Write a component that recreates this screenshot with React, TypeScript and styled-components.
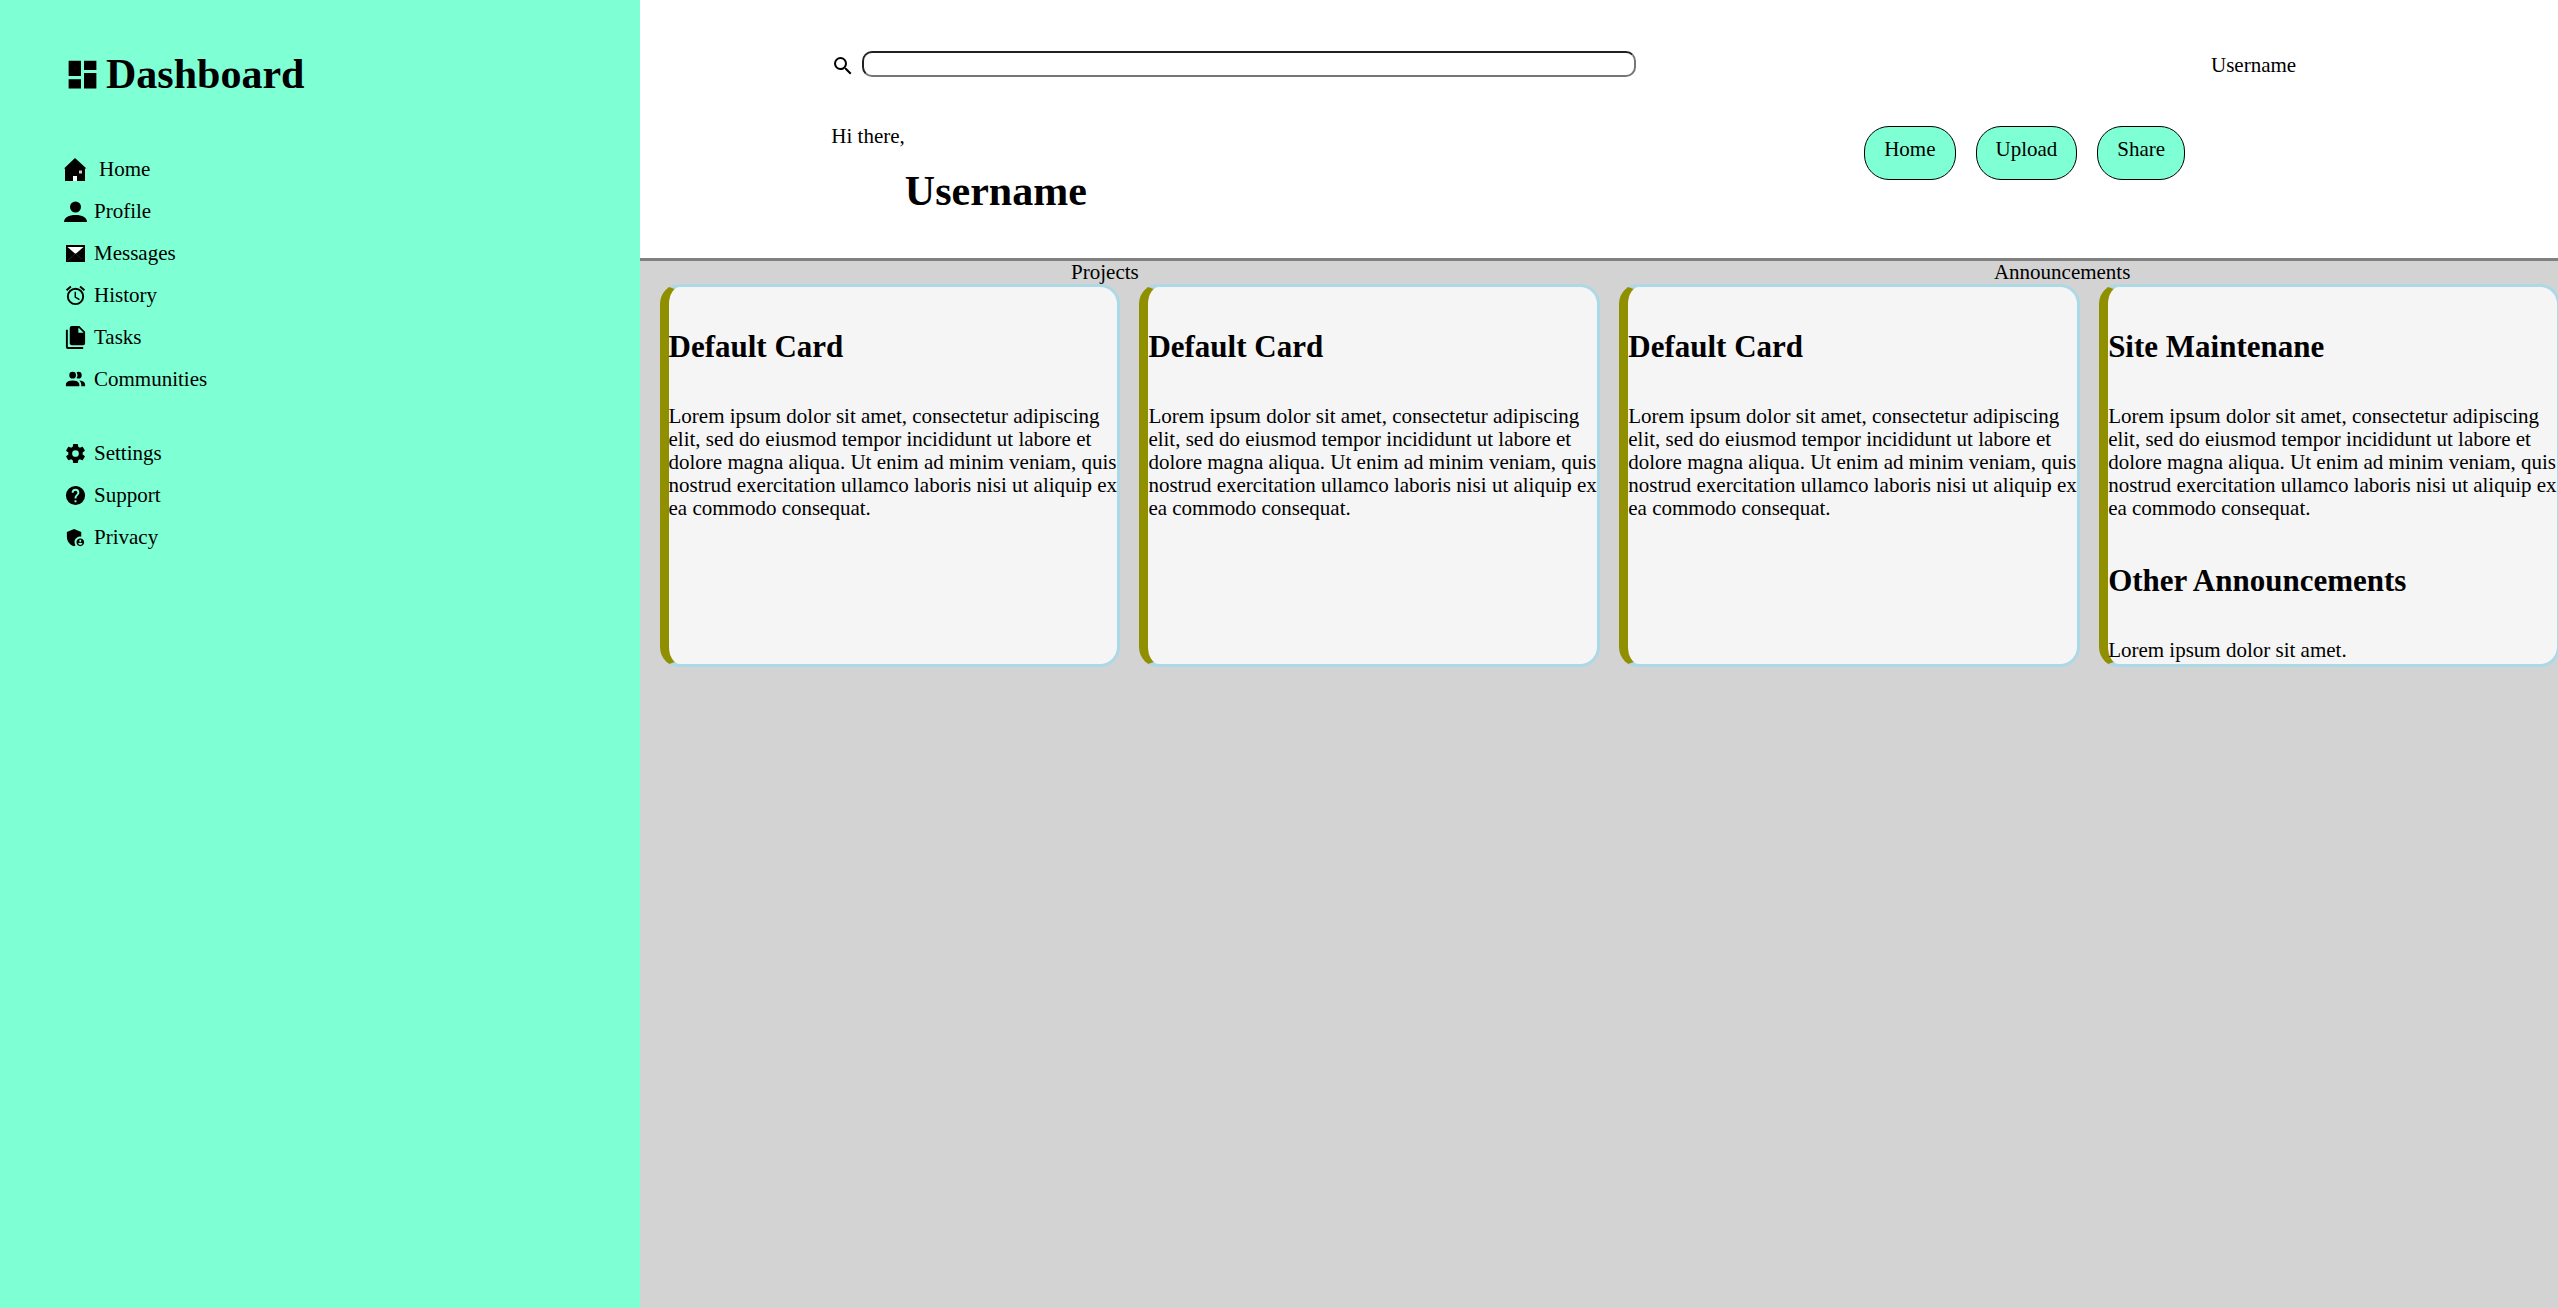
import React from "react";
import styled, { createGlobalStyle } from "styled-components";
import { MdAdminPanelSettings, MdSearch } from "react-icons/md";

const GlobalStyle = createGlobalStyle`
  *, *::before, *::after { box-sizing: border-box; }
  body {
    margin: 0;
    background: lightgray;
    color: #000;
    font-family: "Liberation Serif", "Times New Roman", serif;
    font-size: 21px;
    line-height: 23px;
  }
  h1, h2, p, ul { margin: 0; padding: 0; }
`;

const Page = styled.div`
  display: grid;
  grid-template-columns: 1fr 3fr;
  min-height: 100vh;
`;

const Sidebar = styled.aside`
  display: flex;
  flex-direction: column;
  padding: 50px 64px;
  background: aquamarine;
`;

const Brand = styled.div`
  display: flex;
  align-items: center;
  gap: 5px;
  margin-bottom: 50px;
`;

const Title = styled.h1`
  font-size: 42px;
  line-height: 48px;
`;

const Menu = styled.ul`
  display: flex;
  flex-direction: column;
  list-style: none;
  margin-bottom: 32px;
`;

const MenuItem = styled.li`
  display: flex;
  align-items: center;
  height: 42px;
`;

const MenuLink = styled.a<{ $wide?: boolean }>`
  display: flex;
  align-items: center;
  gap: ${(p) => (p.$wide ? 12 : 7)}px;
  color: inherit;
  text-decoration: none;
`;

const Icon = styled.svg<{ $size: number }>`
  display: block;
  flex: none;
  width: ${(p) => p.$size}px;
  height: ${(p) => p.$size}px;
  overflow: visible;
  fill: #000;
`;

const Main = styled.main`
  min-width: 0;
  overflow-x: clip;
`;

const Header = styled.header`
  display: flex;
  flex-direction: column;
  gap: 47px;
  padding: 51px 10% 43px;
  background: #fff;
  border-bottom: 3px solid gray;
`;

const TopRow = styled.div`
  display: flex;
  align-items: flex-start;
  justify-content: space-between;
  padding-right: 70px;
`;

const SearchBox = styled.label`
  display: flex;
  align-items: flex-start;
  gap: 7px;
  flex: 0 1 805px;

  svg { flex: none; margin-top: 3px; }
`;

const SearchInput = styled.input`
  flex: 1;
  min-width: 0;
  height: 26px;
  padding: 1px 8px;
  border: 2px inset #767676;
  border-radius: 10px;
  background: #fff;
  font: inherit;
`;

const UserName = styled.p`
  padding-top: 3px;
`;

const GreetingRow = styled.div`
  display: flex;
  align-items: flex-start;
  justify-content: space-between;
  padding-right: 181px;
`;

const Greeting = styled.div`
  display: flex;
  align-items: flex-start;

  h1 { margin-top: 42px; }
`;

const Actions = styled.div`
  display: flex;
  gap: 20px;
`;

const ActionButton = styled.button`
  margin: 1px 0 0;
  padding: 11px 19px 18px;
  border: 1px solid #000;
  border-radius: 25px;
  background: aquamarine;
  color: inherit;
  font: inherit;
  cursor: pointer;
`;

const SectionLabels = styled.div`
  display: flex;
  justify-content: space-around;
  padding-left: 4px;
`;

/* The last card bleeds slightly past the right edge. */
const Cards = styled.div`
  display: grid;
  grid-template-columns: repeat(4, minmax(0, 1fr));
  gap: 19px;
  margin-right: -2px;
  padding-left: 20px;
`;

const CardBox = styled.article`
  padding: 42px 0 2px;
  border: 3px solid lightblue;
  border-left: 9px solid #8f8f00;
  border-radius: 20px;
  background: whitesmoke;
`;

const CardTitle = styled.h2`
  margin-bottom: 40px;
  font-size: 31px;
  line-height: 36px;
`;

const CardText = styled.p`
  & + h2 { margin-top: 43px; }
`;

const LOREM =
  "Lorem ipsum dolor sit amet, consectetur adipiscing elit, sed do eiusmod tempor incididunt ut labore et dolore magna aliqua. Ut enim ad minim veniam, quis nostrud exercitation ullamco laboris nisi ut aliquip ex ea commodo consequat.";

const glyph = (d: string) => (
  <Icon $size={23} viewBox="0 0 24 24" aria-hidden="true">
    <path d={d} />
  </Icon>
);

const HomeIcon = (
  <Icon $size={23} viewBox="0 0 23 23" aria-hidden="true">
    <path d="M11 0L22.500 10.500H21V23H1V10.500H0Z" />
    <path fill="#fff" d="M9 18h4v5H9z" />
    <path fill="#ccc" d="M15 12.500h3v3h-3z" />
  </Icon>
);

const ProfileIcon = (
  <Icon $size={23} viewBox="0 0 23 23" aria-hidden="true">
    <circle cx="11.500" cy="7" r="5.500" />
    <path d="M0 22C0 17.500 5 15 11.500 15S23 17.500 23 22Z" />
  </Icon>
);

const MessagesIcon = (
  <Icon $size={23} viewBox="0 0 23 23" aria-hidden="true">
    <path d="M2 3H21V20H2Z" />
    <path fill="#fff" d="M3.500 5H19.500L11.500 12Z" />
    <path fill="none" stroke="#444" strokeWidth="0.500" d="M3 19L11.500 11.500L18 17.500" />
  </Icon>
);

const primary = [
  { label: "Home", icon: HomeIcon, wide: true },
  { label: "Profile", icon: ProfileIcon },
  { label: "Messages", icon: MessagesIcon },
  {
    label: "History",
    icon: glyph(
      "M12,20A7,7 0 0,1 5,13A7,7 0 0,1 12,6A7,7 0 0,1 19,13A7,7 0 0,1 12,20M12,4A9,9 0 0,0 3,13A9,9 0 0,0 12,22A9,9 0 0,0 21,13A9,9 0 0,0 12,4M12.500,8H11V14L15.750,16.850L16.500,15.620L12.500,13.250V8M7.880,3.390L6.600,1.860L2,5.710L3.290,7.240L7.880,3.390M22,5.720L17.400,1.860L16.110,3.390L20.710,7.250L22,5.720Z"
    ),
  },
  {
    label: "Tasks",
    icon: glyph(
      "M15,7H20.500L15,1.500V7M8,0H16L22,6V18A2,2 0 0,1 20,20H8C6.890,20 6,19.100 6,18V2A2,2 0 0,1 8,0M4,4V22H20V24H4A2,2 0 0,1 2,22V4H4Z"
    ),
  },
  {
    label: "Communities",
    icon: glyph(
      "M16 17V19H2V17S2 13 9 13 16 17 16 17M12.500 7.500A3.500 3.500 0 1 0 9 11A3.500 3.500 0 0 0 12.500 7.500M15.940 13A5.320 5.320 0 0 1 18 17V19H22V17S22 13.370 15.940 13M15 4A3.390 3.390 0 0 0 13.070 4.590A5 5 0 0 1 13.070 10.410A3.390 3.390 0 0 0 15 11A3.500 3.500 0 0 0 15 4Z"
    ),
  },
];

const secondary = [
  {
    label: "Settings",
    icon: glyph(
      "M12,15.500A3.500,3.500 0 0,1 8.500,12A3.500,3.500 0 0,1 12,8.500A3.500,3.500 0 0,1 15.500,12A3.500,3.500 0 0,1 12,15.500M19.430,12.970C19.470,12.650 19.500,12.330 19.500,12C19.500,11.670 19.470,11.340 19.430,11L21.540,9.370C21.730,9.220 21.780,8.950 21.660,8.730L19.660,5.270C19.540,5.050 19.270,4.960 19.050,5.050L16.560,6.050C16.040,5.660 15.500,5.320 14.870,5.070L14.500,2.420C14.460,2.180 14.250,2 14,2H10C9.750,2 9.540,2.180 9.500,2.420L9.130,5.070C8.500,5.320 7.960,5.660 7.440,6.050L4.950,5.050C4.730,4.960 4.460,5.050 4.340,5.270L2.340,8.730C2.210,8.950 2.270,9.220 2.460,9.370L4.570,11C4.530,11.340 4.500,11.670 4.500,12C4.500,12.330 4.530,12.650 4.570,12.970L2.460,14.630C2.270,14.780 2.210,15.050 2.340,15.270L4.340,18.730C4.460,18.950 4.730,19.030 4.950,18.950L7.440,17.940C7.960,18.340 8.500,18.680 9.130,18.930L9.500,21.580C9.540,21.820 9.750,22 10,22H14C14.250,22 14.460,21.820 14.500,21.580L14.870,18.930C15.500,18.670 16.040,18.340 16.560,17.940L19.050,18.950C19.270,19.030 19.540,18.950 19.660,18.730L21.660,15.270C21.780,15.050 21.730,14.780 21.540,14.630L19.430,12.970Z"
    ),
  },
  {
    label: "Support",
    icon: glyph(
      "M15.070,11.250L14.170,12.170C13.450,12.890 13,13.500 13,15H11V14.500C11,13.390 11.450,12.390 12.170,11.670L13.410,10.410C13.780,10.050 14,9.550 14,9C14,7.890 13.100,7 12,7A2,2 0 0,0 10,9H8A4,4 0 0,1 12,5A4,4 0 0,1 16,9C16,9.880 15.640,10.670 15.070,11.250M13,19H11V17H13M12,2A10,10 0 0,0 2,12A10,10 0 0,0 12,22A10,10 0 0,0 22,12C22,6.470 17.500,2 12,2Z"
    ),
  },
  { label: "Privacy", icon: <MdAdminPanelSettings size={23} aria-hidden="true" /> },
];

type Entry = { label: string; icon: React.ReactNode; wide?: boolean };

const MenuList = ({ items }: { items: Entry[] }) => (
  <Menu>
    {items.map((item) => (
      <MenuItem key={item.label}>
        <MenuLink href="#" $wide={item.wide}>
          {item.icon}
          {item.label}
        </MenuLink>
      </MenuItem>
    ))}
  </Menu>
);

const cards = [
  [{ title: "Default Card", text: LOREM }],
  [{ title: "Default Card", text: LOREM }],
  [{ title: "Default Card", text: LOREM }],
  [
    { title: "Site Maintenane", text: LOREM },
    { title: "Other Announcements", text: "Lorem ipsum dolor sit amet." },
  ],
];

export default function App() {
  return (
    <>
      <GlobalStyle />
      <Page>
        <Sidebar>
          <Brand>
            <Icon $size={37} viewBox="0 0 24 24" aria-hidden="true">
              <path d="M13,3V9H21V3M13,21H21V11H13M3,21H11V15H3M3,13H11V3H3V13Z" />
            </Icon>
            <Title>Dashboard</Title>
          </Brand>
          <nav>
            <MenuList items={primary} />
            <MenuList items={secondary} />
          </nav>
        </Sidebar>
        <Main>
          <Header>
            <TopRow>
              <SearchBox>
                <MdSearch size={24} aria-hidden="true" />
                <SearchInput type="search" aria-label="Search" />
              </SearchBox>
              <UserName>Username</UserName>
            </TopRow>
            <GreetingRow>
              <Greeting>
                <p>Hi there,</p>
                <Title>Username</Title>
              </Greeting>
              <Actions>
                <ActionButton type="button">Home</ActionButton>
                <ActionButton type="button">Upload</ActionButton>
                <ActionButton type="button">Share</ActionButton>
              </Actions>
            </GreetingRow>
          </Header>
          <SectionLabels>
            <span>Projects</span>
            <span>Announcements</span>
          </SectionLabels>
          <Cards>
            {cards.map((sections, i) => (
              <CardBox key={i}>
                {sections.map((s) => (
                  <React.Fragment key={s.title}>
                    <CardTitle>{s.title}</CardTitle>
                    <CardText>{s.text}</CardText>
                  </React.Fragment>
                ))}
              </CardBox>
            ))}
          </Cards>
        </Main>
      </Page>
    </>
  );
}
